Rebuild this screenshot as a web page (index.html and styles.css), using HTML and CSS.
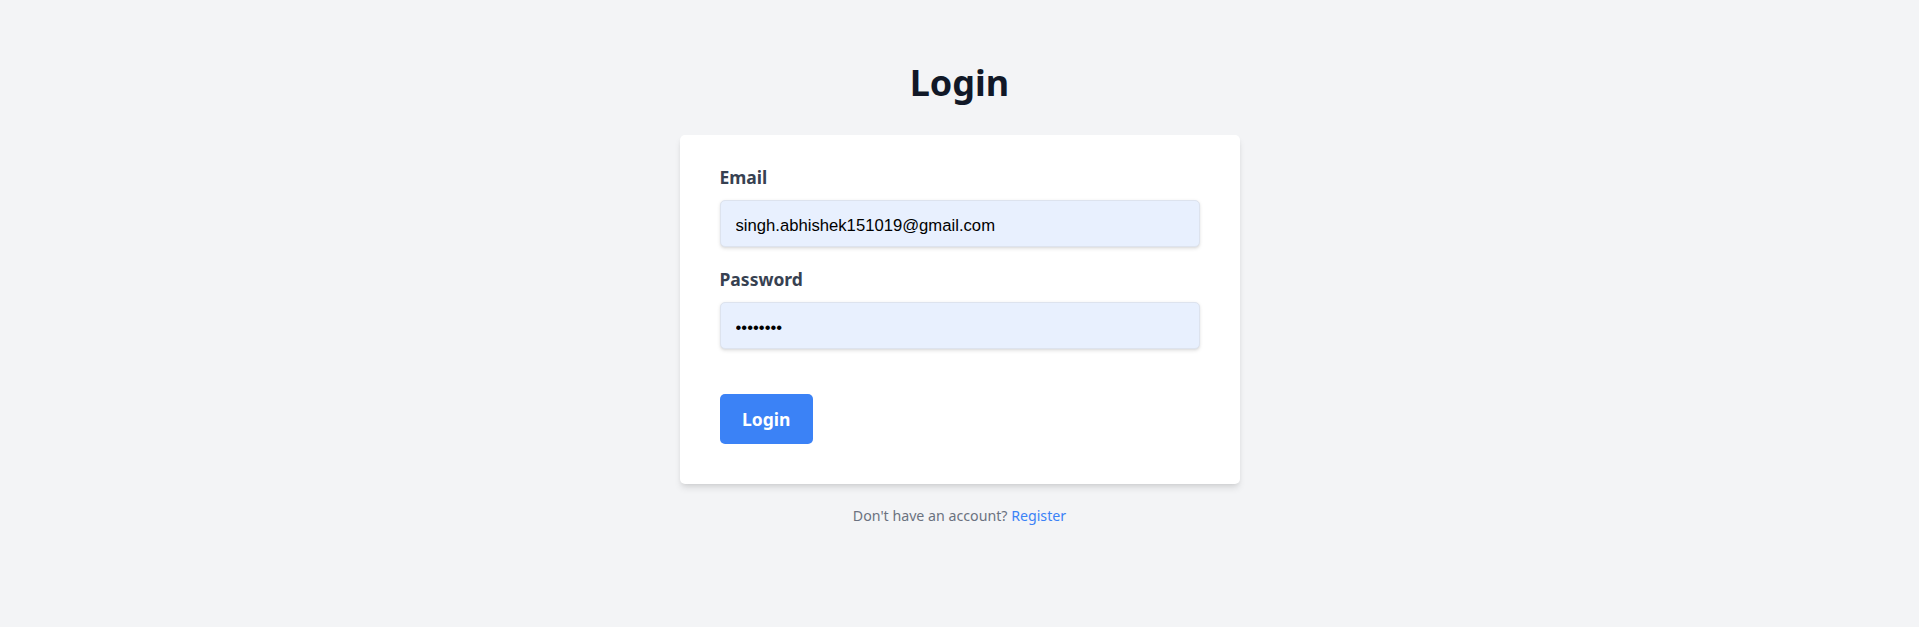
FILE: index.html
```html
<!DOCTYPE html>
<html lang="en">
<head>
<meta charset="utf-8">
<title>Login</title>
<link rel="stylesheet" href="styles.css">
</head>
<body>
<main class="page">
  <h1 class="title">Login</h1>
  <form class="card">
    <div class="field">
      <label class="label" for="email">Email</label>
      <input class="input" id="email" type="email" value="singh.abhishek151019@gmail.com">
    </div>
    <div class="field field-last">
      <label class="label" for="password">Password</label>
      <input class="input" id="password" type="password" value="12345678">
    </div>
    <div class="actions">
      <button class="btn" type="button">Login</button>
    </div>
  </form>
  <p class="footer">Don't have an account? <a class="link" href="#">Register</a></p>
</main>
</body>
</html>
```

FILE: styles.css
```css
html, body {
  margin: 0;
  padding: 0;
}
body {
  background: #f3f4f6;
  font-family: "Noto Sans", "Open Sans", sans-serif;
  min-height: 627px;
}
.page {
  display: flex;
  flex-direction: column;
  align-items: center;
  padding-top: 60px;
}
.title {
  margin: 0 0 30px;
  font-size: 36px;
  line-height: 45px;
  font-weight: 700;
  color: #111827;
}
.card {
  width: 560px;
  box-sizing: border-box;
  background: #fff;
  border-radius: 5px;
  padding: 30px 40px 40px;
  margin: 0 0 21px;
  box-shadow: 0 5px 7.5px -1.25px rgba(0,0,0,0.1), 0 2.5px 5px -2.5px rgba(0,0,0,0.1);
}
.field {
  margin-bottom: 20px;
}
.field-last {
  margin-bottom: 45px;
}
.label {
  display: block;
  font-size: 17.5px;
  line-height: 25px;
  font-weight: 700;
  color: #374151;
  margin-bottom: 10px;
}
.input {
  display: block;
  width: 100%;
  box-sizing: border-box;
  height: 47px;
  padding: 5px 15px 0;
  border: 1.25px solid #dde3ee;
  border-radius: 5px;
  background: #e8f0fe;
  color: #000;
  font-family: "Liberation Sans", Arial, sans-serif;
  font-size: 16.67px;
  box-shadow: 0 1.25px 3.75px 0 rgba(0,0,0,0.1), 0 1.25px 2.5px -1.25px rgba(0,0,0,0.1);
  outline: none;
}
.actions {
  display: flex;
  align-items: center;
}
.btn {
  background: #3b82f6;
  color: #fff;
  font-family: inherit;
  font-weight: 700;
  font-size: 17.5px;
  line-height: 30px;
  padding: 10px 22.5px;
  border: none;
  border-radius: 5px;
  cursor: pointer;
}
.footer {
  margin: 0;
  text-align: center;
  font-size: 14.2px;
  line-height: 22px;
  color: #6b7280;
}
.link {
  color: #3b82f6;
  text-decoration: none;
}
```
